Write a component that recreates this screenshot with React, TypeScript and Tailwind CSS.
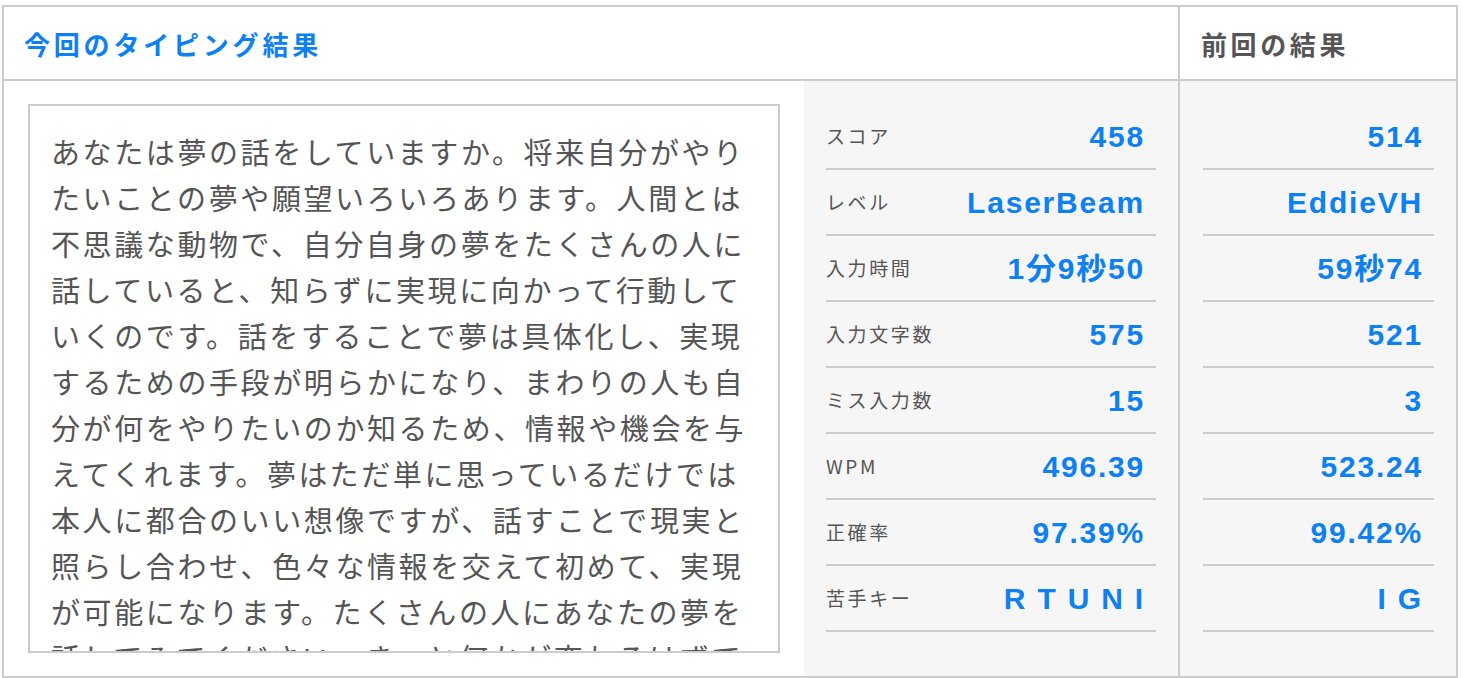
import React from "react";

type Stat = { label: string; now: string; prev: string };

const stats: Stat[] = [
  { label: "スコア", now: "458", prev: "514" },
  { label: "レベル", now: "LaserBeam", prev: "EddieVH" },
  { label: "入力時間", now: "1分9秒50", prev: "59秒74" },
  { label: "入力文字数", now: "575", prev: "521" },
  { label: "ミス入力数", now: "15", prev: "3" },
  { label: "WPM", now: "496.39", prev: "523.24" },
  { label: "正確率", now: "97.39%", prev: "99.42%" },
  { label: "苦手キー", now: "R T U N I", prev: "I G" },
];

const typedText =
  "あなたは夢の話をしていますか。将来自分がやりたいことの夢や願望いろいろあります。人間とは不思議な動物で、自分自身の夢をたくさんの人に話していると、知らずに実現に向かって行動していくのです。話をすることで夢は具体化し、実現するための手段が明らかになり、まわりの人も自分が何をやりたいのか知るため、情報や機会を与えてくれます。夢はただ単に思っているだけでは本人に都合のいい想像ですが、話すことで現実と照らし合わせ、色々な情報を交えて初めて、実現が可能になります。たくさんの人にあなたの夢を話してみてください。きっと何かが変わるはずです。";

export default function App() {
  return (
    <div className="pt-[5px] pl-[2px] font-['Noto_Sans_CJK_JP',sans-serif] bg-white min-h-screen">
      <div className="w-[1456px] border-2 border-[#cccccc]">
        {/* header */}
        <div className="flex border-b-2 border-[#cccccc]">
          <div className="w-[1176px] h-[72px] border-r-2 border-[#cccccc] flex items-center pl-[20px]">
            <h2 className="m-0 text-[26px] font-bold tracking-[3.8px] text-[#0d80f2]">今回のタイピング結果</h2>
          </div>
          <div className="flex-1 h-[72px] flex items-center pl-[21px]">
            <h2 className="m-0 text-[26px] font-bold tracking-[3.6px] text-[#555555]">前回の結果</h2>
          </div>
        </div>

        {/* body */}
        <div className="flex">
          <div className="w-[800px] bg-white pl-[24px] pr-[24px] pt-[23px] pb-[23px]">
            <div className="h-[549px] overflow-hidden border-2 border-[#cccccc] pl-[21px] pr-[22px] pt-[22px]">
              <p className="m-0 text-[29px] leading-[46px] tracking-[2.6px] text-[#555555]">{typedText}</p>
            </div>
          </div>

          <div className="w-[376px] bg-[#f6f6f6] border-r-2 border-[#cccccc] px-[22px] pt-[23px]">
            {stats.map((s) => (
              <div key={s.label} className="h-[66px] flex items-center justify-between border-b-2 border-[#cccccc]">
                <span className="text-[19px] tracking-[2.6px] text-[#555555]">{s.label}</span>
                <span className="pr-[11px] text-[30px] font-bold tracking-[1.8px] text-[#0d80f2] font-['Liberation_Sans','Noto_Sans_CJK_JP',sans-serif]">
                  {s.now}
                </span>
              </div>
            ))}
          </div>

          <div className="flex-1 bg-[#f6f6f6] pl-[23px] pr-[22px] pt-[23px]">
            {stats.map((s) => (
              <div key={s.label} className="h-[66px] flex items-center justify-end border-b-2 border-[#cccccc]">
                <span className="pr-[11px] text-[30px] font-bold tracking-[1.8px] text-[#0d80f2] font-['Liberation_Sans','Noto_Sans_CJK_JP',sans-serif]">
                  {s.prev}
                </span>
              </div>
            ))}
          </div>
        </div>
      </div>
    </div>
  );
}
